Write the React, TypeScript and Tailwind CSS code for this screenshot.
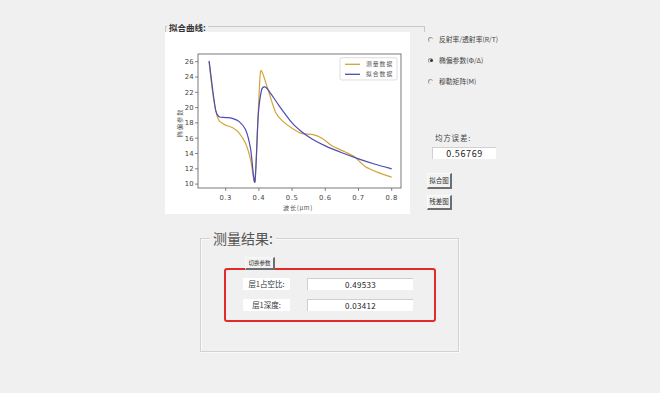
import React from 'react'

type Pt = [number, number]

// 数据坐标 → 图内像素
const X = (v: number) => 60.7 + (v - 0.3) * 332
const Y = (v: number) => 29.7 + (26 - v) * 7.65

const measured: Pt[] = [
  [0.25, 26], [0.26, 22.2], [0.27, 19.6], [0.28, 18.3], [0.3, 17.7], [0.32, 17.4],
  [0.34, 16.7], [0.36, 15.3], [0.375, 13.2], [0.388, 10.3], [0.396, 17.5], [0.404, 24.4],
  [0.412, 24.4], [0.43, 22], [0.45, 19.4], [0.47, 18.3], [0.5, 17.3], [0.53, 16.6],
  [0.56, 16.5], [0.59, 16.0], [0.62, 15.0], [0.66, 14.2], [0.69, 13.5], [0.72, 12.3],
  [0.76, 11.5], [0.8, 10.9],
]

const fitted: Pt[] = [
  [0.25, 26.1], [0.26, 22.6], [0.27, 19.6], [0.28, 18.8], [0.3, 18.7], [0.32, 18.6],
  [0.34, 18.2], [0.36, 17.1], [0.375, 14.6], [0.388, 10.3], [0.398, 19], [0.408, 22.3],
  [0.418, 22.7], [0.43, 22.2], [0.46, 20.3], [0.5, 18], [0.53, 16.8], [0.56, 15.9],
  [0.6, 15], [0.65, 14.1], [0.7, 13.3], [0.75, 12.6], [0.8, 12.0],
]

function smoothPath(data: Pt[]) {
  const p = data.map(([a, b]) => [X(a), Y(b)] as Pt)
  const k = 8
  let d = `M${p[0][0].toFixed(2)},${p[0][1].toFixed(2)}`
  for (let i = 0; i < p.length - 1; i++) {
    const p0 = p[i - 1] ?? p[i]
    const p1 = p[i]
    const p2 = p[i + 1]
    const p3 = p[i + 2] ?? p2
    const c1x = p1[0] + (p2[0] - p0[0]) / k
    const c1y = p1[1] + (p2[1] - p0[1]) / k
    const c2x = p2[0] - (p3[0] - p1[0]) / k
    const c2y = p2[1] - (p3[1] - p1[1]) / k
    d += ` C${c1x.toFixed(2)},${c1y.toFixed(2)} ${c2x.toFixed(2)},${c2y.toFixed(2)} ${p2[0].toFixed(2)},${p2[1].toFixed(2)}`
  }
  return d
}

function Chart() {
  const yTicks = [10, 12, 14, 16, 18, 20, 22, 24, 26]
  const xTicks = [0.3, 0.4, 0.5, 0.6, 0.7, 0.8]
  return (
    <svg width="245" height="182" viewBox="0 0 245 182" className="block">
      <defs>
        <clipPath id="plot">
          <rect x="33" y="22" width="203" height="134" />
        </clipPath>
      </defs>
      <g clipPath="url(#plot)" fill="none" strokeWidth="1.2" strokeLinejoin="round">
        <path d={smoothPath(measured)} stroke="#d2a53a" />
        <path d={smoothPath(fitted)} stroke="#4c4cb4" />
      </g>
      <rect x="33" y="22" width="203" height="134" fill="none" stroke="#6a6a6a" strokeWidth="0.9" />
      <g fontFamily="'DejaVu Sans', sans-serif" fontSize="6.8" fill="#444">
        {yTicks.map(t => (
          <g key={t}>
            <line x1="30" x2="33" y1={Y(t)} y2={Y(t)} stroke="#555" strokeWidth="0.7" />
            <text x="28.5" y={Y(t) + 2.3} textAnchor="end">
              {t}
            </text>
          </g>
        ))}
        {xTicks.map(t => (
          <g key={t}>
            <line x1={X(t)} x2={X(t)} y1="156" y2="159" stroke="#555" strokeWidth="0.7" />
            <text x={X(t)} y="167.5" textAnchor="middle" letterSpacing="0.6">
              {t.toFixed(1)}
            </text>
          </g>
        ))}
      </g>
      <g fontFamily="'Noto Sans CJK SC', sans-serif" fontSize="6.2" fill="#555">
        <text x="133" y="177.5" textAnchor="middle" letterSpacing="0.6">
          波长(μm)
        </text>
        <text x="17" y="91" textAnchor="middle" letterSpacing="1" transform="rotate(-90 17 91)">
          椭偏参数
        </text>
      </g>
      {/* 图例 */}
      <rect x="175" y="25.7" width="57" height="22.3" rx="2" fill="#fff" stroke="#d0d0d0" strokeWidth="0.7" />
      <line x1="180" x2="195" y1="32.3" y2="32.3" stroke="#d2a53a" strokeWidth="1.3" />
      <line x1="180" x2="195" y1="42.3" y2="42.3" stroke="#4c4cb4" strokeWidth="1.3" />
      <g fontFamily="'Noto Sans CJK SC', sans-serif" fontSize="5.8" fill="#555" letterSpacing="1">
        <text x="201" y="34.4">测量数据</text>
        <text x="201" y="44.4">拟合数据</text>
      </g>
    </svg>
  )
}

function Radio({ label, checked = false }: { label: string; checked?: boolean }) {
  return (
    <div className="flex h-[10px] items-center">
      <span className="relative flex h-[5px] w-[5px] items-center justify-center rounded-full border-l border-t border-[#9a9a9a]">
        {checked && <span className="h-[3px] w-[3px] rounded-full bg-[#333]" />}
      </span>
      <span className="ml-[6px] text-[6.8px] leading-[10px] text-[#444]">{label}</span>
    </div>
  )
}

function SmallButton({ label, className = '' }: { label: string; className?: string }) {
  return (
    <div
      className={`flex items-center justify-center border-r-2 border-b-2 border-t border-l border-r-[#6e6e6e] border-b-[#6e6e6e] border-t-[#fafafa] border-l-[#fafafa] bg-[#f3f3f3] text-[6.5px] text-[#333] ${className}`}
    >
      {label}
    </div>
  )
}

function ResultRow({ label, value }: { label: string; value: string }) {
  return (
    <div className="flex gap-[17px]">
      <div className="flex h-[12px] w-[47px] items-center justify-center bg-white text-[7.5px] text-[#333]">
        {label}
      </div>
      <div className="flex h-[12px] w-[106px] items-center justify-center border-t border-l border-[#cfcfcf] bg-white text-[8px] tracking-[0.3px] text-[#222]">
        {value}
      </div>
    </div>
  )
}

export default function App() {
  return (
    <div className="h-[393px] w-[660px] overflow-hidden bg-[#f0f0f0] font-['Noto_Sans_CJK_SC',sans-serif]">
      {/* 上部：拟合曲线 + 右侧选项 */}
      <div className="flex pt-[23px] pl-[165px]">
        <div className="flex w-[260px] flex-col">
          <div className="flex h-[9px]">
            <span className="mt-[3px] h-[6px] w-[2px] border-t border-l border-[#c8c8c8]" />
            <span className="px-[2px] text-[8.5px] leading-[9px] font-semibold text-[#333]">拟合曲线:</span>
            <span className="mt-[3px] h-[6px] flex-1 border-t border-r border-[#c8c8c8]" />
          </div>
          <div className="h-[182px] w-[245px] bg-white">
            <Chart />
          </div>
        </div>

        <div className="ml-[3px] flex flex-col">
          <div className="mt-[11px] flex flex-col gap-[11px]">
            <Radio label="反射率/透射率(R/T)" />
            <Radio label="椭偏参数(Φ/Δ)" checked />
            <Radio label="穆勒矩阵(M)" />
          </div>
          <div className="mt-[47px] ml-[7px] h-[10px] text-[7.5px] leading-[10px] tracking-[0.8px] text-[#444]">
            均方误差:
          </div>
          <div className="mt-[4px] ml-[4px] flex h-[12px] w-[64px] items-center justify-center border-t border-l border-[#d0d0d0] bg-white text-[9px] tracking-[0.6px] text-[#222]">
            0.56769
          </div>
          <SmallButton label="拟合图" className="mt-[14px] -ml-[1px] h-[16px] w-[25px]" />
          <SmallButton label="残差图" className="mt-[6px] -ml-[1px] h-[15px] w-[25px]" />
        </div>
      </div>

      {/* 测量结果 */}
      <div className="mt-[24px] ml-[200px] h-[114px] w-[259px] border border-[#d2d2d2] shadow-[inset_1px_1px_0_#fafafa,1px_1px_0_#fafafa]">
        <div className="-mt-[9px] ml-[9px] w-fit bg-[#f0f0f0] px-[3px] text-[14px] leading-[17px] text-[#555]">
          测量结果:
        </div>
        <SmallButton label="切换参数" className="relative z-10 mt-[10px] ml-[44px] h-[13px] w-[30px] !text-[5.5px]" />
        <div className="-mt-[2px] ml-[23px] flex h-[54px] w-[212px] flex-col gap-[9px] rounded-[3px] border-2 border-[#e12a2a] pt-[8px] pl-[17px]">
          <ResultRow label="层1占空比:" value="0.49533" />
          <ResultRow label="层1深度:" value="0.03412" />
        </div>
      </div>
    </div>
  )
}
